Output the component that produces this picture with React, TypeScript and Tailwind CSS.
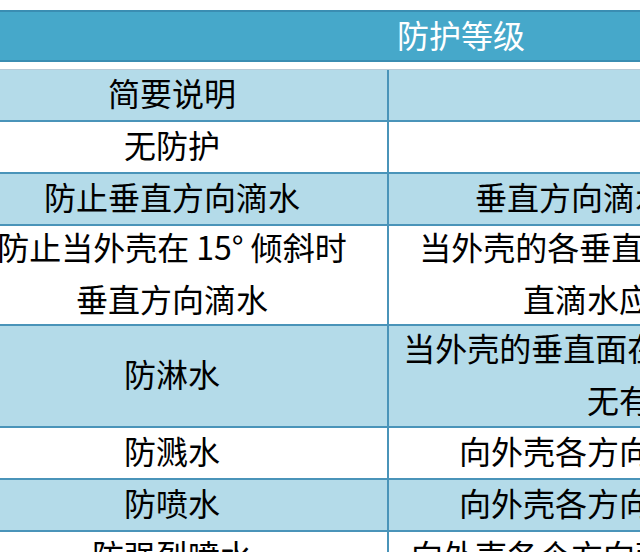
import React from 'react'

type Row = {
  left: string[]
  right: string[]
  h: string
  blue: boolean
}

const rows: Row[] = [
  { left: ['简要说明'], right: ['IP'], h: 'h-[52px]', blue: true },
  { left: ['无防护'], right: ['无'], h: 'h-[52px]', blue: false },
  { left: ['防止垂直方向滴水'], right: ['垂直方向滴水应无有害影响'], h: 'h-[52px]', blue: true },
  {
    left: ['防止当外壳在 15° 倾斜时', '垂直方向滴水'],
    right: ['当外壳的各垂直面在15°倾斜时，垂', '直滴水应无有害影响'],
    h: 'h-[100px]',
    blue: false,
  },
  {
    left: ['防淋水'],
    right: ['当外壳的垂直面在60°范围内淋水时，', '无有害影响'],
    h: 'h-[102px]',
    blue: true,
  },
  { left: ['防溅水'], right: ['向外壳各方向溅水无有害影响'], h: 'h-[52px]', blue: false },
  { left: ['防喷水'], right: ['向外壳各方向喷水无有害影响'], h: 'h-[52px]', blue: true },
  { left: ['防强烈喷水'], right: ['向外壳各个方向强烈喷水无有害影响'], h: 'h-[52px]', blue: false },
]

function Cell({ lines, className = '' }: { lines: string[]; className?: string }) {
  return (
    <div className={`flex flex-col items-center justify-center text-center pb-[6px] ${className}`}>
      {lines.map((l, i) => (
        <div key={i} className="whitespace-nowrap leading-[52px]">
          {l}
        </div>
      ))}
    </div>
  )
}

export default function App() {
  return (
    <div className="w-[640px] h-[552px] overflow-hidden bg-white text-black text-[32px] font-['Noto_Sans_CJK_SC','Noto_Sans',sans-serif]">
      <div className="ml-[-43px] w-[1008px] pt-[10px]">
        <div className="h-[52px] pb-[4px] bg-[#46a8ca] border-y-2 border-[#3a8db2] flex items-center justify-center text-white">
          防护等级
        </div>
        <div className="h-[8px] border-b border-[#b9cbd8]" />
        {rows.map((r, i) => (
          <div
            key={i}
            className={`flex ${r.h} border-b-2 border-[#4a94b9] ${r.blue ? 'bg-[#b4dbe9]' : 'bg-white'}`}
          >
            <Cell lines={r.left} className="w-[432px] border-r-2 border-[#4a94b9]" />
            <Cell lines={r.right} className="flex-1 pr-[20px]" />
          </div>
        ))}
      </div>
    </div>
  )
}
